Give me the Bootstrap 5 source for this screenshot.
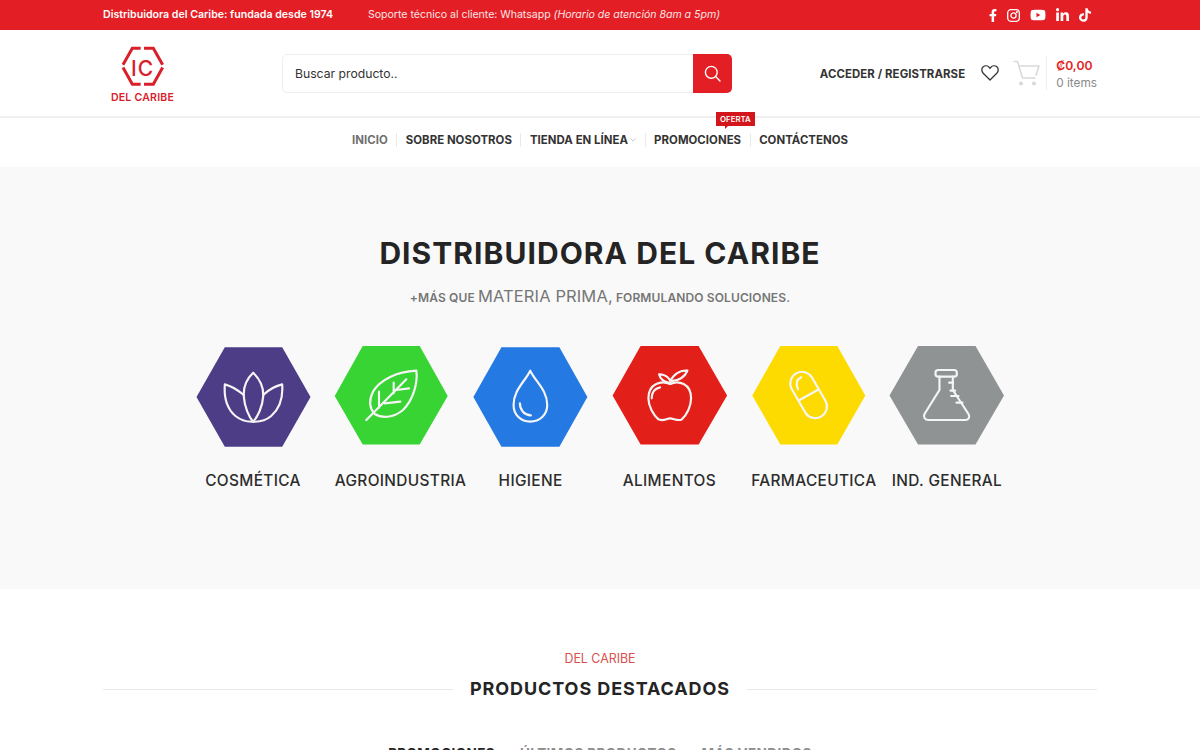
<!DOCTYPE html>
<html lang="es">
<head>
<meta charset="utf-8">
<title>Distribuidora del Caribe</title>
<link href="https://cdn.jsdelivr.net/npm/bootstrap@5.3.0/dist/css/bootstrap.min.css" rel="stylesheet">
<style>
html,body{height:750px;overflow:hidden}
body{font-family:Inter,"Noto Sans","Liberation Sans",sans-serif;color:#333;background:#fff}
.wrap{width:994px;margin:0 auto}
.topbar{height:30px;background:#e31e24;color:#fff;font-size:10.6px}
.topbar .wrap{height:30px}
.top-strong{font-weight:600;width:265px}
.top-soft{color:#fbe4e4;letter-spacing:-.03px}
.soc{fill:#fff;display:block}
.soc-row{gap:10px;margin-right:6px}
.mainhead{height:88px;border-bottom:2px solid #f0f0f0}
.mainhead .wrap{height:86px}
.logo-box{width:179px}
.search-box{width:450px;height:39px}
.search-box .form-control{font-size:12.2px;color:#333;border:1px solid #eee;border-radius:5px 0 0 5px;padding:0 12px;box-shadow:none;height:39px}
.search-box .form-control::placeholder{color:#333;opacity:1}
.search-btn{width:39px;height:39px;background:#e31e24;border:0;border-radius:0 5px 5px 0;padding:0}
.acct{font-size:11.4px;font-weight:700;color:#333;letter-spacing:.1px;padding-top:3px}
.heart{margin-left:16px}
.cartico{margin-left:14px}
.cart-sep{width:1px;height:34px;background:#eee;margin:0 9px 0 6px}
.cart-text{padding-top:2px}
.price{font-size:12.2px;font-weight:600;color:#e31e24;line-height:17px}
.items{font-size:11.8px;color:#8a8a8a;line-height:18px}
.menubar{height:49px;padding-bottom:5px}
.menubar .nav-link{font-size:11.4px;font-weight:700;color:#333;padding:0 8.5px;line-height:14px;white-space:nowrap;letter-spacing:.05px}
.menubar .nav-item+.nav-item{border-left:1px solid #eaeaea}
.menubar .nav-link.on{color:#6f6f6f}
.caret{margin-left:2px;vertical-align:2px}
.tagger{position:absolute;top:-21px;right:-5px;background:#d2161c;color:#fff;font-size:7.8px;font-weight:600;line-height:14px;height:14px;padding:0 4px}
.tagger::after{content:"";position:absolute;left:9px;bottom:-3px;border-style:solid;border-width:3px 3px 0 0;border-color:#d2161c transparent transparent transparent}
.hero{height:422px;background:#f9f9f9;padding-top:67px}
.hero-title{font-size:30px;font-weight:700;color:#242424;line-height:38px;margin:0;letter-spacing:1.05px}
.hero-sub{font-size:12px;font-weight:600;color:#767676;line-height:24px;margin:12px 0 0;letter-spacing:.12px}
.hero-sub span{font-size:16.5px;font-weight:400}
.cats{display:grid;grid-template-columns:repeat(6,114px);column-gap:24.8px;width:809px;margin:36px auto 0;transform:translateX(.5px)}
.cat-item{width:114px;white-space:nowrap;text-align:center;color:#333;text-decoration:none}
.cat-item svg{display:block;overflow:visible;width:116px;height:102px}
.cat-label{font-size:15.4px;font-weight:500;line-height:20px;margin-top:23px;color:#2c2c2c;letter-spacing:.35px}
.ic-line{fill:none;stroke:#f5f5f5;stroke-width:6.5;stroke-linecap:round;stroke-linejoin:round}
.feat{padding-top:61px}
.feat-kicker{font-size:12.4px;color:#d8504d;line-height:18px}
.feat-row{margin-top:9px}
.feat-rule{flex:1;height:1px;background:#e9e9e9}
.feat-title{font-size:18px;font-weight:700;color:#242424;margin:0;line-height:24px;padding:0 17px;letter-spacing:.9px}
.tabs-row{margin-top:42px;gap:25px}
.tabs-row a{font-size:13.5px;font-weight:700;color:#8d8d8d;text-decoration:none;line-height:20px;letter-spacing:.4px}
.tabs-row a.on{color:#242424}
</style>
</head>
<body>
<div class="topbar">
  <div class="wrap d-flex align-items-center">
    <div class="top-strong">Distribuidora del Caribe: fundada desde 1974</div>
    <div class="top-soft">Soporte técnico al cliente: Whatsapp <em>(Horario de atención 8am a 5pm)</em></div>
    <div class="ms-auto d-flex align-items-center soc-row">
      <svg class="soc" width="8" height="15" viewBox="0 0 320 512" aria-label="Facebook"><path d="M279.14 288l14.22-92.66h-88.91v-60.13c0-25.35 12.42-50.06 52.24-50.06h40.42V6.26S260.43 0 225.36 0c-73.22 0-121.08 44.38-121.08 124.72v70.62H22.89V288h81.39v224h100.17V288z"/></svg>
      <svg width="13" height="13" viewBox="0 0 13 13" fill="none" stroke="#fff" stroke-width="1.3" class="d-block" aria-label="Instagram"><rect x=".7" y=".7" width="11.6" height="11.6" rx="3.2"/><circle cx="6.5" cy="6.5" r="2.6"/><circle cx="9.9" cy="3.1" r=".4" fill="#fff"/></svg>
      <svg class="soc" width="16" height="14" viewBox="0 0 576 512" aria-label="YouTube"><path d="M549.655 124.083c-6.281-23.65-24.787-42.276-48.284-48.597C458.781 64 288 64 288 64S117.22 64 74.629 75.486c-23.497 6.322-42.003 24.947-48.284 48.597-11.412 42.867-11.412 132.305-11.412 132.305s0 89.438 11.412 132.305c6.281 23.65 24.787 41.5 48.284 47.821C117.22 448 288 448 288 448s170.78 0 213.371-11.486c23.497-6.321 42.003-24.171 48.284-47.821 11.412-42.867 11.412-132.305 11.412-132.305s0-89.438-11.412-132.305zm-317.51 213.508V175.185l142.739 81.205-142.739 81.201z"/></svg>
      <svg class="soc" width="13" height="15" viewBox="0 0 448 512" aria-label="LinkedIn"><path d="M100.28 448H7.4V148.9h92.88zM53.79 108.1C24.09 108.1 0 83.5 0 53.8a53.79 53.79 0 0 1 107.58 0c0 29.7-24.1 54.3-53.79 54.3zM447.9 448h-92.68V302.4c0-34.7-.7-79.2-48.29-79.2-48.29 0-55.69 37.7-55.69 76.7V448h-92.78V148.9h89.08v40.8h1.3c12.4-23.5 42.69-48.3 87.88-48.3 94 0 111.28 61.9 111.28 142.3V448z"/></svg>
      <svg class="soc" width="12" height="14" viewBox="0 0 448 512" aria-label="TikTok"><path d="M448,209.91a210.06,210.06,0,0,1-122.77-39.25V349.38A162.55,162.55,0,1,1,185,188.31V278.2a74.62,74.62,0,1,0,52.23,71.18V0l88,0a121.18,121.18,0,0,0,1.86,22.17h0A122.18,122.18,0,0,0,381,102.39a121.43,121.43,0,0,0,67,20.14Z"/></svg>
    </div>
  </div>
</div>

<header class="mainhead">
  <div class="wrap d-flex align-items-center">
    <div class="logo-box">
      <svg width="100" height="75" viewBox="8 1.500 100 75" class="d-block" aria-label="IC Del Caribe">
        <g transform="scale(.3333)" fill="none" stroke="#d9202a" stroke-width="9">
          <path d="M137 41H112L84 91M147 41H175L203 91M84 99L112 149H137M203 99L175 149H147"/>
        </g>
        <text x="47.5" y="41" text-anchor="middle" font-family="Inter,sans-serif" font-size="21" font-weight="500" fill="#d9202a" letter-spacing="1">IC</text>
        <text x="47.5" y="66" text-anchor="middle" font-family="Inter,sans-serif" font-size="10.500" font-weight="600" fill="#d9202a" letter-spacing=".25">DEL CARIBE</text>
      </svg>
    </div>
    <form class="input-group search-box flex-nowrap">
      <input class="form-control" type="text" placeholder="Buscar producto.." aria-label="Buscar producto">
      <button class="btn search-btn d-flex align-items-center justify-content-center" type="button" aria-label="Buscar">
        <svg width="17" height="17" viewBox="0 0 17 17" fill="none" stroke="#fff" stroke-width="1.4" stroke-linecap="round"><circle cx="7.3" cy="7.3" r="5.9"/><path d="M11.6 11.6l4.4 4.4"/></svg>
      </button>
    </form>
    <a href="#" class="acct text-decoration-none ms-auto">ACCEDER / REGISTRARSE</a>
    <svg class="d-block heart" width="18" height="16" viewBox="0 0 18 16" fill="none" stroke="#333" stroke-width="1.3" stroke-linejoin="round" aria-label="Favoritos"><path d="M9 15L2.2 8.2C.3 6.2.4 3.3 2.2 1.8 4 .4 6.700.7 8.2 2.4L9 3.3l.8-.9C11.3.7 14 .4 15.800 1.800c1.800 1.500 1.900 4.400 0 6.400z"/></svg>
    <svg class="d-block cartico" width="27" height="26" viewBox="0 0 27 26" fill="none" stroke="#d9d9d9" stroke-width="1.6" stroke-linejoin="round" stroke-linecap="round" aria-label="Carrito"><path d="M1 1.5h3.5L9.5 18H22M6.500 6H26l-3 9"/><circle cx="8" cy="23.500" r="1.300" fill="#d9d9d9"/><circle cx="21" cy="23.500" r="1.300" fill="#d9d9d9"/></svg>
    <div class="cart-sep"></div>
    <div class="cart-text">
      <div class="price">₡0,00</div>
      <div class="items">0 items</div>
    </div>
  </div>
</header>

<nav class="menubar d-flex align-items-center justify-content-center">
  <ul class="nav flex-nowrap align-items-center">
    <li class="nav-item"><a class="nav-link on" href="#">INICIO</a></li>
    <li class="nav-item"><a class="nav-link" href="#">SOBRE NOSOTROS</a></li>
    <li class="nav-item"><a class="nav-link" href="#">TIENDA EN LÍNEA<svg class="caret" width="6" height="4" viewBox="0 0 6 4" fill="none" stroke="#bbb" stroke-width=".8"><path d="M.5.5L3 3 5.500.5"/></svg></a></li>
    <li class="nav-item position-relative"><a class="nav-link" href="#">PROMOCIONES</a><span class="tagger">OFERTA</span></li>
    <li class="nav-item"><a class="nav-link" href="#">CONTÁCTENOS</a></li>
  </ul>
</nav>

<section class="hero text-center">
  <h1 class="hero-title">DISTRIBUIDORA DEL CARIBE</h1>
  <p class="hero-sub">+MÁS QUE <span>MATERIA PRIMA,</span> FORMULANDO SOLUCIONES.</p>
  <div class="cats">
    <a class="cat-item" href="#">
      <svg viewBox="196 346 116 102" aria-label="Cosmética">
        <polygon fill="#4d3d87" points="196,397 224.300,347.300 281.700,347.300 310,397 281.700,446.700 224.300,446.700"/>
        <g transform="translate(190 340) scale(.3333)" class="ic-line">
          <path d="M188 98C165 120 158 145 160 170 162 200 175 230 188 245 202 230 216 200 218 170 220 145 210 120 188 98Z"/>
          <path d="M160 165C140 148 122 138 103 133 100 170 108 205 135 228 150 240 170 246 188 245"/>
          <path d="M218 165C235 148 255 138 275 133 278 170 268 205 242 228 228 240 205 246 188 245"/>
        </g>
      </svg>
      <div class="cat-label">COSMÉTICA</div>
    </a>
    <a class="cat-item" href="#">
      <svg viewBox="334.800 346 116 102" aria-label="Agroindustria">
        <polygon fill="#37d433" points="335,396 363,346 420,346 448,396 420,444.500 363,444.500"/>
        <g transform="translate(190 340) scale(.3333)" class="ic-line">
          <path d="M680 92C620 95 570 120 550 155 535 185 540 205 555 222 575 235 610 235 640 210 670 180 685 130 680 92Z"/>
          <path d="M530 240L650 118M568 203V155M612 160V128M585 190L632 185M620 150L658 145"/>
        </g>
      </svg>
      <div class="cat-label">AGROINDUSTRIA</div>
    </a>
    <a class="cat-item" href="#">
      <svg viewBox="473.600 346 116 102" aria-label="Higiene">
        <polygon fill="#2479e2" points="473.500,397 501.500,347.300 559.500,347.300 587.500,397 559.500,446.700 501.500,446.700"/>
        <g transform="translate(465 340) scale(.3333)" class="ic-line">
          <path d="M196 92C180 125 146 150 146 195 146 225 168 245 196 245 224 245 247 225 247 195 247 150 212 125 196 92Z"/>
          <path d="M165 190C165 210 178 225 198 226"/>
        </g>
      </svg>
      <div class="cat-label">HIGIENE</div>
    </a>
    <a class="cat-item" href="#">
      <svg viewBox="612.400 346 116 102" aria-label="Alimentos">
        <polygon fill="#e31f1a" points="612.500,395.500 640.500,346 698.500,346 727,395.500 698.500,444.500 640.500,444.500"/>
        <g transform="translate(465 340) scale(.3333)" class="ic-line">
          <path d="M615 132C590 120 550 130 550 175 550 200 565 225 580 238 595 245 605 235 615 235 625 235 640 245 650 238 665 225 678 200 678 175 678 130 640 120 615 132Z"/>
          <path d="M560 175C560 155 570 145 585 142"/>
          <path d="M616 122C628 100 648 90 667 92 660 110 640 125 616 122Z"/>
          <path d="M610 128C595 125 585 115 582 103 595 102 610 110 616 122V132"/>
        </g>
      </svg>
      <div class="cat-label">ALIMENTOS</div>
    </a>
    <a class="cat-item" href="#">
      <svg viewBox="751.200 346 116 102" aria-label="Farmaceutica">
        <polygon fill="#fedb00" points="752,395.500 780,346 837,346 865,395.500 837,444.500 780,444.500"/>
        <g transform="translate(745 340) scale(.3333)" class="ic-line">
          <rect x="155" y="90" width="70" height="150" rx="35" transform="rotate(-30 190 165)"/>
          <path d="M163 180L217 150M158 148C150 130 155 118 168 112"/>
        </g>
      </svg>
      <div class="cat-label">FARMACEUTICA</div>
    </a>
    <a class="cat-item" href="#">
      <svg viewBox="890 346 116 102" aria-label="Ind. General">
        <polygon fill="#8f9393" points="890,395.500 918.500,346 976,346 1004.500,395.500 976,444.500 918.500,444.500"/>
        <g transform="translate(745 340) scale(.3333)" class="ic-line">
          <rect x="573" y="90" width="64" height="20" rx="8"/>
          <path d="M585 110V150L540 222C535 233 543 240 552 240H662C672 240 678 232 672 222L625 150V110"/>
          <path d="M614 128H626M618 152H632M620 168H642M636 188H654"/>
        </g>
      </svg>
      <div class="cat-label">IND. GENERAL</div>
    </a>
  </div>
</section>

<section class="feat text-center">
  <div class="feat-kicker">DEL CARIBE</div>
  <div class="wrap d-flex align-items-center feat-row">
    <div class="feat-rule"></div>
    <h2 class="feat-title">PRODUCTOS DESTACADOS</h2>
    <div class="feat-rule"></div>
  </div>
  <div class="d-flex justify-content-center tabs-row">
    <a class="on" href="#">PROMOCIONES</a>
    <a href="#">ÚLTIMOS PRODUCTOS</a>
    <a href="#">MÁS VENDIDOS</a>
  </div>
</section>
<script src="https://cdn.jsdelivr.net/npm/bootstrap@5.3.0/dist/js/bootstrap.bundle.min.js"></script>
</body>
</html>
